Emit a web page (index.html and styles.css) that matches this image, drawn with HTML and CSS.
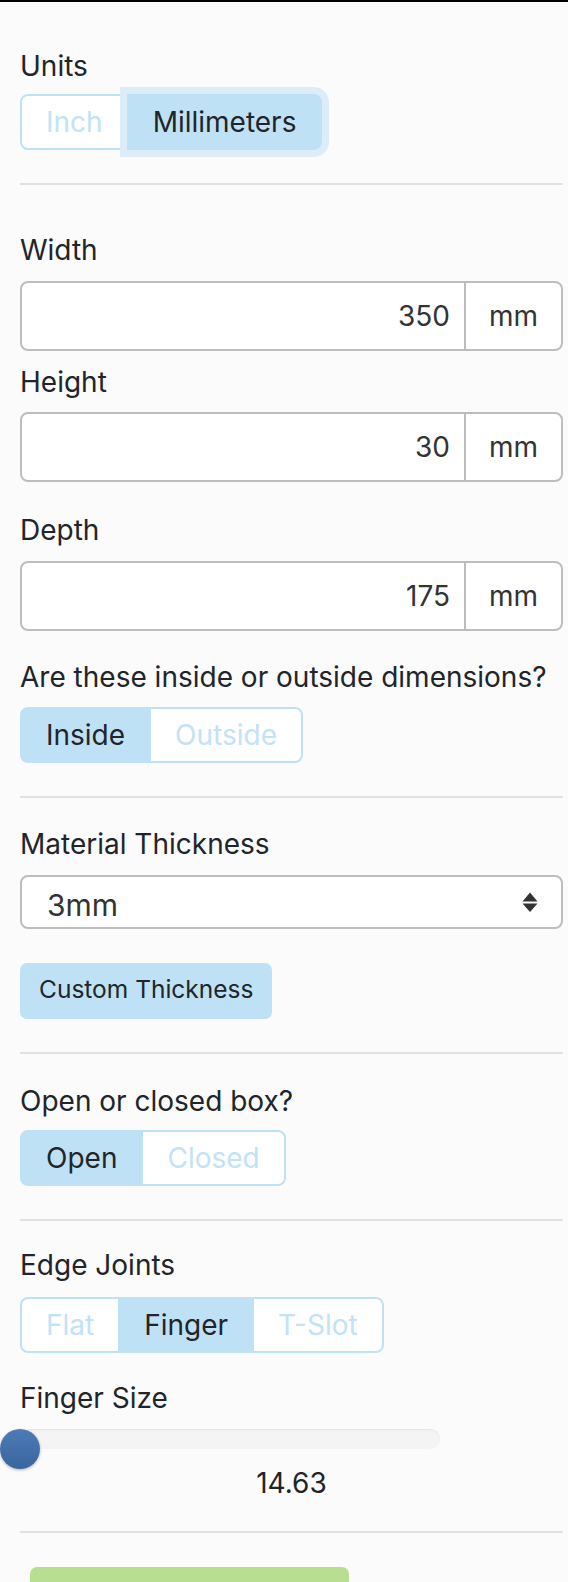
FILE: index.html
```html
<!DOCTYPE html>
<html lang="en">
<head>
<meta charset="utf-8">
<title>Box settings</title>
<link rel="stylesheet" href="styles.css">
</head>
<body>
<div class="panel">
  <div class="label l-units">Units</div>
  <div class="btn-group g-units">
    <span class="tbtn first">Inch</span>
    <span class="tbtn last active focus">Millimeters</span>
  </div>
  <hr class="sep s1">

  <div class="label l-width">Width</div>
  <div class="input-group ig-width"><div class="field">350</div><div class="addon">mm</div></div>
  <div class="label l-height">Height</div>
  <div class="input-group ig-height"><div class="field">30</div><div class="addon">mm</div></div>
  <div class="label l-depth">Depth</div>
  <div class="input-group ig-depth"><div class="field">175</div><div class="addon">mm</div></div>

  <div class="label l-question">Are these inside or outside dimensions?</div>
  <div class="btn-group g-inside">
    <span class="tbtn first active">Inside</span>
    <span class="tbtn last">Outside</span>
  </div>
  <hr class="sep s2">

  <div class="label l-material">Material Thickness</div>
  <div class="select">
    <span class="select-value">3mm</span>
    <svg class="select-arrows" width="16" height="21" viewBox="0 0 16 21"><polygon points="0.5,9.5 15.5,9.5 8,0.5" fill="#333"/><polygon points="0.5,11.5 15.5,11.5 8,20" fill="#333"/></svg>
  </div>
  <div class="btn-sm">Custom Thickness</div>
  <hr class="sep s3">

  <div class="label l-open">Open or closed box?</div>
  <div class="btn-group g-open">
    <span class="tbtn first active">Open</span>
    <span class="tbtn last">Closed</span>
  </div>
  <hr class="sep s4">

  <div class="label l-edge">Edge Joints</div>
  <div class="btn-group g-edge">
    <span class="tbtn first">Flat</span>
    <span class="tbtn active">Finger</span>
    <span class="tbtn last">T-Slot</span>
  </div>

  <div class="label l-finger">Finger Size</div>
  <div class="slider">
    <div class="track"></div>
    <div class="thumb"></div>
  </div>
  <div class="value">14.63</div>
  <hr class="sep s5">

  <div class="go"></div>
</div>
</body>
</html>
```

FILE: styles.css
```css
* { box-sizing: border-box; }
html, body { margin: 0; padding: 0; }
body {
  background: #fbfbfb;
  font-family: Inter, "Noto Sans", "Liberation Sans", sans-serif;
  color: #212529;
  font-size: 28px;
  line-height: 42px;
  overflow: hidden;
}
.panel {
  border-top: 2px solid #000;
  padding: 43px 5px 0 20px;
}
.label { height: 42px; line-height: 42px; white-space: nowrap; }

.sep {
  border: 0;
  height: 2px;
  background: #e1e1e1;
  margin: 0;
}

/* toggle button groups */
.btn-group { display: flex; width: max-content; height: 56px; }
.tbtn {
  display: block;
  height: 56px;
  line-height: 52px;
  padding: 0 24px;
  border: 2px solid #bfe1f6;
  background: #fff;
  color: #c2e2f7;
  margin-left: -2px;
}
.tbtn.first { margin-left: 0; border-radius: 8px 0 0 8px; }
.tbtn.last { border-radius: 0 8px 8px 0; }
.tbtn.active { background: #bfe1f6; color: #212529; }
.tbtn.focus { position: relative; box-shadow: 0 0 0 7px #dcedf9; }

/* number inputs */
.input-group {
  display: flex;
  height: 70px;
  border: 2px solid #bdbdbd;
  border-radius: 8px;
  background: #fff;
  color: #333;
}
.field { flex: 1; text-align: right; padding-right: 14px; line-height: 66px; }
.addon { width: 97px; border-left: 2px solid #bdbdbd; text-align: center; line-height: 66px; }

/* select */
.select {
  display: flex;
  align-items: center;
  justify-content: space-between;
  height: 54px;
  border: 2px solid #bdbdbd;
  border-radius: 8px;
  background: #fff;
  padding: 0 23px 0 25px;
  font-size: 30px;
  line-height: normal;
  color: #333;
}
.select-value { margin-top: 5px; }
.select-arrows { display: block; }

.btn-sm {
  display: flex;
  align-items: center;
  width: max-content;
  height: 56px;
  padding: 0 19px 4px;
  background: #bfe1f6;
  border-radius: 7px;
  font-size: 24.5px;
  line-height: normal;
  color: #212529;
}

/* slider */
.slider { position: relative; height: 40px; }
.track {
  margin-top: 10px;
  width: 420px;
  height: 20px;
  border-radius: 10px;
  background: #f4f4f4;
  box-shadow: inset 0 1px 2px rgba(0, 0, 0, 0.07);
}
.thumb {
  position: absolute;
  left: -20px;
  top: 0;
  width: 40px;
  height: 40px;
  border-radius: 50%;
  background: linear-gradient(#4c7bb5, #3a659f);
  box-shadow: 0 1px 3px rgba(0, 0, 0, 0.3);
}
.value { text-align: center; line-height: 28px; }

.go {
  margin: 34px 0 0 10px;
  width: 319px;
  height: 56px;
  background: #b8df91;
  border-radius: 7px;
}

/* vertical rhythm */
.g-units { margin-top: 7px; }
.s1 { margin-top: 33px; }
.l-width { margin-top: 44px; }
.ig-width { margin-top: 10px; }
.l-height { margin-top: 10px; }
.ig-height { margin-top: 9px; }
.l-depth { margin-top: 27px; }
.ig-depth { margin-top: 10px; }
.l-question { margin-top: 25px; }
.g-inside { margin-top: 9px; }
.s2 { margin-top: 33px; }
.l-material { margin-top: 25px; }
.select { margin-top: 10px; }
.btn-sm { margin-top: 34px; }
.s3 { margin-top: 33px; }
.l-open { margin-top: 26px; }
.g-open { margin-top: 8px; }
.s4 { margin-top: 33px; }
.l-edge { margin-top: 23px; }
.g-edge { margin-top: 11px; }
.l-finger { margin-top: 24px; }
.slider { margin-top: 9px; }
.s5 { margin-top: 34px; }
```
